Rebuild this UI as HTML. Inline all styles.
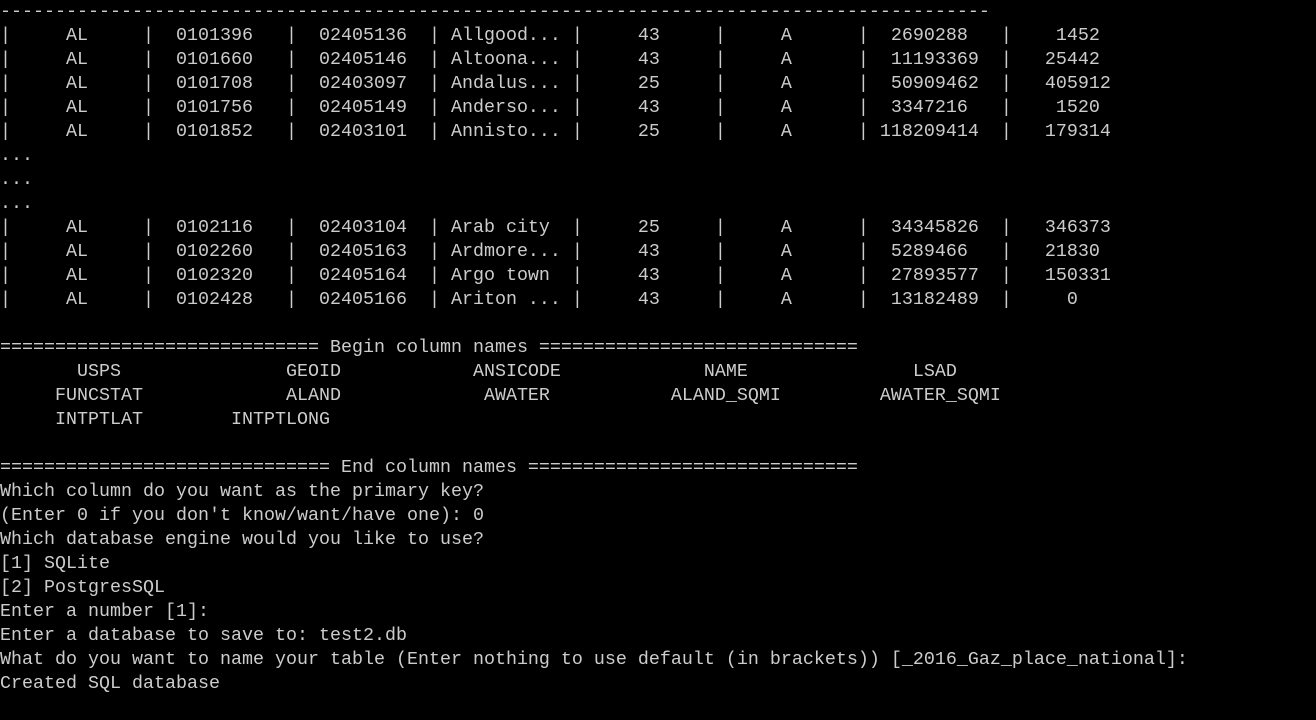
<!DOCTYPE html>
<html><head><meta charset="utf-8"><style>
html,body{margin:0;padding:0;background:#000;width:1316px;height:720px;overflow:hidden}
pre{margin:0;padding:0;font-family:"Liberation Mono",monospace;font-size:18.333px;line-height:24px;color:#cccccc;white-space:pre}
</style></head><body><pre>------------------------------------------------------------------------------------------
|     AL     |  0101396   |  02405136  | Allgood... |     43     |     A      |  2690288   |    1452
|     AL     |  0101660   |  02405146  | Altoona... |     43     |     A      |  11193369  |   25442
|     AL     |  0101708   |  02403097  | Andalus... |     25     |     A      |  50909462  |   405912
|     AL     |  0101756   |  02405149  | Anderso... |     43     |     A      |  3347216   |    1520
|     AL     |  0101852   |  02403101  | Annisto... |     25     |     A      | 118209414  |   179314
...
...
...
|     AL     |  0102116   |  02403104  | Arab city  |     25     |     A      |  34345826  |   346373
|     AL     |  0102260   |  02405163  | Ardmore... |     43     |     A      |  5289466   |   21830
|     AL     |  0102320   |  02405164  | Argo town  |     43     |     A      |  27893577  |   150331
|     AL     |  0102428   |  02405166  | Ariton ... |     43     |     A      |  13182489  |     0

============================= Begin column names =============================
       USPS               GEOID            ANSICODE             NAME               LSAD
     FUNCSTAT             ALAND             AWATER           ALAND_SQMI         AWATER_SQMI
     INTPTLAT        INTPTLONG

============================== End column names ==============================
Which column do you want as the primary key?
(Enter 0 if you don't know/want/have one): 0
Which database engine would you like to use?
[1] SQLite
[2] PostgresSQL
Enter a number [1]:
Enter a database to save to: test2.db
What do you want to name your table (Enter nothing to use default (in brackets)) [_2016_Gaz_place_national]:
Created SQL database</pre></body></html>
